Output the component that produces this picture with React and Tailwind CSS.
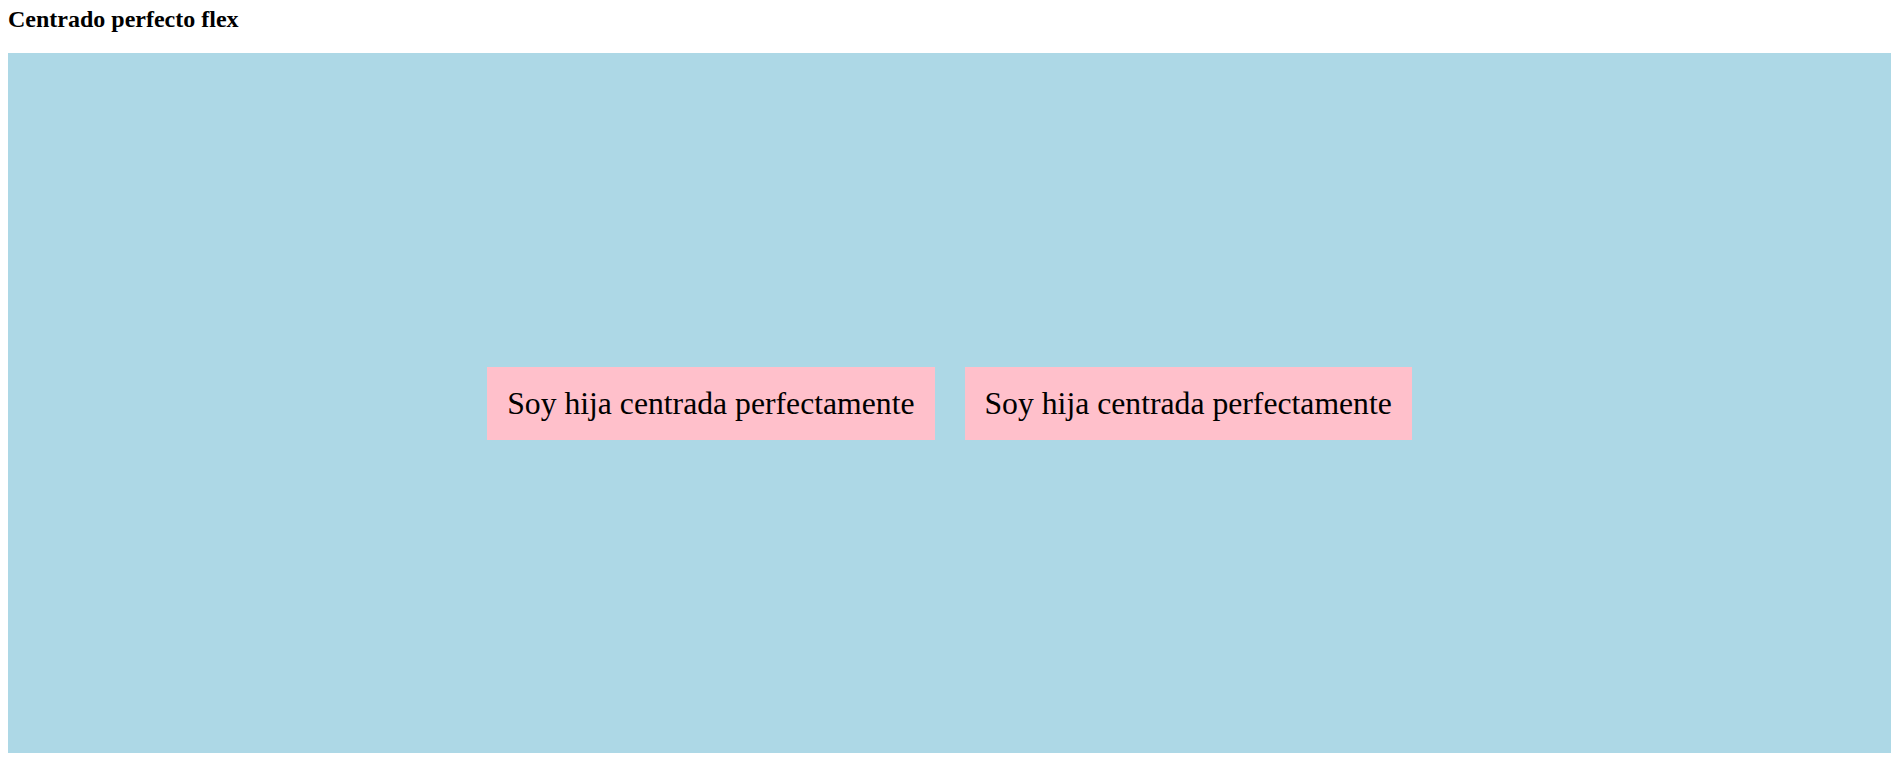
export default function App() {
  return (
    <div className="pt-[5px] pb-[7px] font-['Liberation_Serif',serif] text-black bg-white">
      <h2 className="mx-2 mb-5 text-[24px] leading-[28px] font-bold">Centrado perfecto flex</h2>
      <div className="mx-2 h-[700px] bg-[#add8e6] flex items-center justify-center gap-[30px]">
        <div className="bg-[#ffc0cb] px-5 py-[18px] text-[31.7px] leading-[37px]">Soy hija centrada perfectamente</div>
        <div className="bg-[#ffc0cb] px-5 py-[18px] text-[31.7px] leading-[37px]">Soy hija centrada perfectamente</div>
      </div>
    </div>
  );
}
